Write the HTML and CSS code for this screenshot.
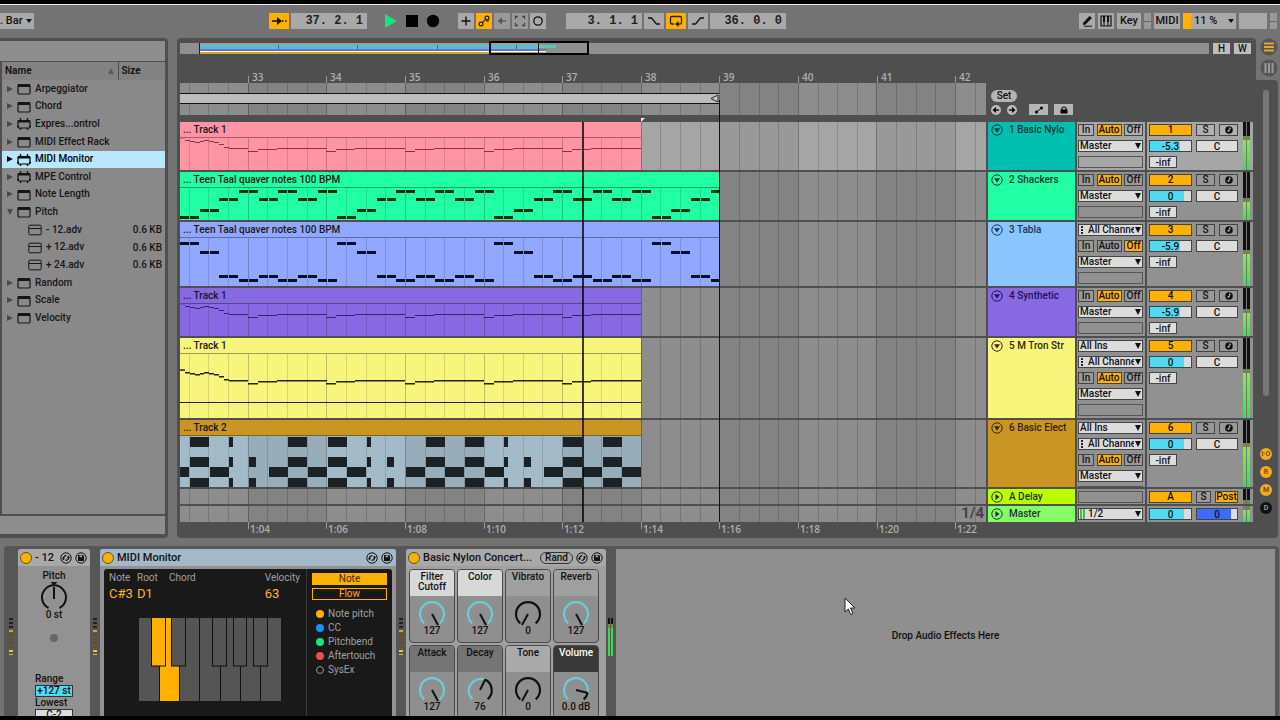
FILE: index.html
```html
<!DOCTYPE html>
<html lang="en">
<head>
<meta charset="utf-8">
<title>Arrangement</title>
<link rel="stylesheet" href="styles.css">
</head>
<body>
<svg class="defs" aria-hidden="true">
  <symbol id="dev" viewBox="0 0 14 12"><rect x="1" y="1.5" width="12" height="9.5" rx="1" fill="none" stroke="currentColor" stroke-width="1.2"/><rect x="1" y="1" width="12" height="3" fill="currentColor"/></symbol>
  <symbol id="max" viewBox="0 0 14 12"><rect x="1" y="2.5" width="12" height="7.5" rx="1" fill="none" stroke="currentColor" stroke-width="1.2"/><rect x="1" y="2" width="12" height="2.5" fill="currentColor"/><path d="M3.5 0v3M10.5 0v3M3.5 10v2M10.5 10v2M0 8.5h2M12 8.5h2" stroke="currentColor" stroke-width="1.4"/></symbol>
  <symbol id="adv" viewBox="0 0 14 12"><rect x=".8" y="1.2" width="12.4" height="9.6" rx="1" fill="none" stroke="currentColor"/><path d="M1 4.5h12" stroke="currentColor"/></symbol>
  <symbol id="fold" viewBox="0 0 12 12"><circle cx="6" cy="6" r="5.2" fill="none" stroke="currentColor"/><path d="M3 4.3h6L6 8.6z" fill="currentColor"/></symbol>
  <symbol id="unfold" viewBox="0 0 12 12"><circle cx="6" cy="6" r="5.2" fill="none" stroke="currentColor"/><path d="M4.4 3v6L8.6 6z" fill="currentColor"/></symbol>
  <symbol id="arm" viewBox="0 0 8 8"><circle cx="4" cy="4" r="3.8" fill="#111"/><path d="M4.5 1.5v3M4.5 1.8l1.5 1" stroke="#bbb" stroke-width=".8"/><circle cx="3.5" cy="4.8" r="1" fill="#bbb"/></symbol>
  <symbol id="swap" viewBox="0 0 12 12"><circle cx="6" cy="6" r="5.2" fill="none" stroke="currentColor"/><path d="M3.4 7.2C3.2 5 4.4 3.6 6.4 3.6M8.6 4.8c.2 2.2-1 3.6-3 3.6" fill="none" stroke="currentColor" stroke-width="1.3"/><path d="M2 6.2h3L3.5 8.4zM7 5.8h3L8.5 3.6z" fill="currentColor"/></symbol>
  <symbol id="disk" viewBox="0 0 12 12"><circle cx="6" cy="6" r="5.2" fill="none" stroke="currentColor"/><path d="M3 3h5l1 1v5H3z" fill="currentColor"/><path d="M4.6 3.6h2.6v1.6H4.6z" fill="#aaa"/></symbol>
  <symbol id="knobMax" viewBox="0 0 28 26"><path d="M6.3 22.3A12 12 0 1 1 21.7 22.3" fill="none" stroke="#6ccbd6" stroke-width="2.2"/><path d="M14 13l6 11" stroke="#111" stroke-width="2"/></symbol>
  <symbol id="knobMin" viewBox="0 0 28 26"><path d="M6.3 22.3A12 12 0 1 1 21.7 22.3" fill="none" stroke="#111" stroke-width="2.2"/><path d="M14 13l-6 11" stroke="#111" stroke-width="2"/></symbol>
  <symbol id="knobMid" viewBox="0 0 28 26"><path d="M19.5 2.8A12 12 0 0 1 21.7 22.3" fill="none" stroke="#111" stroke-width="2.2"/><path d="M6.3 22.3A12 12 0 0 1 19.5 2.8" fill="none" stroke="#6ccbd6" stroke-width="2.2"/><path d="M14 13l5.5-11" stroke="#111" stroke-width="2"/></symbol>
  <symbol id="knobVol" viewBox="0 0 28 26"><path d="M25.6 16A12 12 0 0 1 21.7 22.3" fill="none" stroke="#111" stroke-width="2.2"/><path d="M6.3 22.3A12 12 0 1 1 25.6 16" fill="none" stroke="#6ccbd6" stroke-width="2.2"/><path d="M14 13l12 3" stroke="#111" stroke-width="2"/></symbol>
</svg>

<div class="app">
  <header class="topbar">
    <div class="group bar-group"><button class="tb quant">. Bar <i class="caret"></i></button></div>
    <div class="group follow-group">
      <button class="tb on w20" aria-label="Follow"><svg width="16" height="10"><path d="M1 5h7M11 5h1.5M14 5h1.5" stroke="#111" stroke-width="1.4"/><path d="M6 1l5 4-5 4z" fill="#111"/></svg></button>
      <input class="tb pos w76" aria-label="Position" value="37. 2. 1">
    </div>
    <div class="group play-group">
      <button class="bare" aria-label="Play"><svg width="14" height="14"><path d="M1 0l12 7-12 7z" fill="#1fe07d"/></svg></button>
      <button class="bare" aria-label="Stop"><svg width="14" height="14"><rect x="1" y="1" width="12" height="12" fill="#000"/></svg></button>
      <button class="bare" aria-label="Record"><svg width="14" height="14"><circle cx="7" cy="7" r="6.2" fill="#000"/></svg></button>
    </div>
    <div class="group edit-group">
      <button class="tb w16" aria-label="Overdub"><svg width="12" height="12"><path d="M6 1.5v9M1.5 6h9" stroke="#111" stroke-width="1.4"/></svg></button>
      <button class="tb on w16" aria-label="Automation arm"><svg width="12" height="12" fill="none" stroke="#222" stroke-width="1.2"><circle cx="3" cy="9" r="1.9"/><circle cx="9" cy="3" r="1.9"/><path d="M4.4 7.6C6 6.5 6 5.5 7.6 4.4M8 6h3"/></svg></button>
      <button class="tb w16 dim" aria-label="Re-enable automation"><svg width="12" height="12"><path d="M4 6h6" stroke="#555" stroke-width="1.4"/><path d="M6 2.5v7L1.5 6z" fill="#555"/></svg></button>
      <button class="tb w16 dim" aria-label="Capture"><svg width="12" height="12"><path d="M1.5 4V1.5H4M8 1.5h2.5V4M10.5 8v2.5H8M4 10.5H1.5V8" fill="none" stroke="#444" stroke-width="1.3"/></svg></button>
      <button class="tb w16" aria-label="Session record"><svg width="12" height="12"><circle cx="6" cy="6" r="4.2" fill="none" stroke="#111" stroke-width="1.3"/></svg></button>
    </div>
    <div class="group loop-group">
      <input class="tb pos w76" aria-label="Loop start" value="3. 1. 1">
      <button class="tb w20" aria-label="Punch in"><svg width="14" height="10"><path d="M1 2h3.5l5 6H13" fill="none" stroke="#111" stroke-width="1.3"/></svg></button>
      <button class="tb on w20" aria-label="Loop"><svg width="14" height="12"><path d="M5 9H3Q1.5 9 1.5 7.5v-4.500Q1.500 1.500 3 1.500h8Q12.500 1.500 12.500 3v4.500Q12.500 9 11 9H9" fill="none" stroke="#222" stroke-width="1.3"/><path d="M9.5 6v6L6 9z" fill="#222"/></svg></button>
      <button class="tb w20" aria-label="Punch out"><svg width="14" height="10"><path d="M1 8h3.5l5-6H13" fill="none" stroke="#111" stroke-width="1.3"/></svg></button>
      <input class="tb pos w76" aria-label="Loop length" value="36. 0. 0">
    </div>
    <div class="group right-group">
      <button class="tb w16" aria-label="Draw"><svg width="12" height="12"><path d="M2 8l6.500-7L11 3 4.500 9.500 2 10z" fill="#111"/><path d="M3 11.200h8" stroke="#111"/></svg></button>
      <button class="tb w16" aria-label="Computer keyboard"><svg width="12" height="12"><path d="M1 1h10v10H1z" fill="none" stroke="#111" stroke-width="1.2"/><path d="M4 1v6M8 1v6" stroke="#111" stroke-width="2"/><path d="M4 6v5M8 6v5" stroke="#111"/></svg></button>
      <button class="tb w24">Key</button>
      <i class="leds"></i>
      <button class="tb w26">MIDI</button>
      <button class="tb cpu">11 % <i class="caret"></i></button>
      <i class="tb w28"></i>
      <i class="leds"></i>
    </div>
  </header>

  <main class="main">
    <section class="browser">
      <div class="browser-top"></div>
      <div class="browser-list">
        <table>
          <thead><tr><th>Name <i class="sort"></i></th><th class="size">Size</th></tr></thead>
          <tbody>
            <tr><td><i class="tri"></i><svg><use href="#dev"/></svg>Arpeggiator</td><td></td></tr>
            <tr><td><i class="tri"></i><svg><use href="#dev"/></svg>Chord</td><td></td></tr>
            <tr><td><i class="tri"></i><svg><use href="#max"/></svg>Expres...ontrol</td><td></td></tr>
            <tr><td><i class="tri"></i><svg><use href="#dev"/></svg>MIDI Effect Rack</td><td></td></tr>
            <tr class="sel"><td><i class="tri"></i><svg><use href="#max"/></svg>MIDI Monitor</td><td></td></tr>
            <tr><td><i class="tri"></i><svg><use href="#max"/></svg>MPE Control</td><td></td></tr>
            <tr><td><i class="tri"></i><svg><use href="#dev"/></svg>Note Length</td><td></td></tr>
            <tr><td><i class="tri open"></i><svg><use href="#dev"/></svg>Pitch</td><td></td></tr>
            <tr class="child"><td><svg><use href="#adv"/></svg>- 12.adv</td><td>0.6 KB</td></tr>
            <tr class="child"><td><svg><use href="#adv"/></svg>+ 12.adv</td><td>0.6 KB</td></tr>
            <tr class="child"><td><svg><use href="#adv"/></svg>+ 24.adv</td><td>0.6 KB</td></tr>
            <tr><td><i class="tri"></i><svg><use href="#dev"/></svg>Random</td><td></td></tr>
            <tr><td><i class="tri"></i><svg><use href="#dev"/></svg>Scale</td><td></td></tr>
            <tr><td><i class="tri"></i><svg><use href="#dev"/></svg>Velocity</td><td></td></tr>
          </tbody>
        </table>
      </div>
      <div class="browser-foot"></div>
    </section>

    <section class="arrange">
      <div class="overview">
        <div class="overview-strip">
          <svg width="430" height="17" aria-hidden="true">
            <rect x="20" y="3" width="338" height="2" fill="#c98a80"/><rect x="20" y="4" width="338" height="5" fill="#62b9c9"/><rect x="358" y="5" width="18" height="3" fill="#5cc9b5"/><rect x="20" y="9" width="346" height="2" fill="#6a72c4"/><rect x="20" y="11" width="346" height="1" fill="#fff"/><rect x="20" y="12" width="346" height="2" fill="#cfa63a"/>
            <path d="M19.5 3v11" stroke="#222"/><path d="M98.5 5v4M177.5 5v4M257.5 5v4M336.5 5v4" stroke="#2d6f88"/>
            <rect x="310" y="2" width="98" height="12" fill="none" stroke="#000" stroke-width="2"/><path d="M358.5 2v12" stroke="#111"/>
          </svg>
        </div>
        <button class="hw">H</button><button class="hw">W</button>
      </div>
      <div class="heads">
        <div class="heads-time">
          <svg class="ruler" data-ruler="bars"></svg>
          <div class="scrub"><svg class="grid"></svg><div class="loop"><svg width="10" height="9"><path d="M9 1L2 4.500 9 8z" fill="#ccc" stroke="#222"/></svg></div></div>
        </div>
        <div class="heads-side">
          <button class="set">Set</button>
          <div class="locators">
            <button class="round" aria-label="Previous locator"><svg width="8" height="8"><path d="M1 4h6" stroke="#111" stroke-width="1.5"/><path d="M4 .8v6.400L.6 4z" fill="#111"/></svg></button>
            <button class="round" aria-label="Next locator"><svg width="8" height="8"><path d="M1 4h6" stroke="#111" stroke-width="1.5"/><path d="M4 .8v6.400L7.400 4z" fill="#111"/></svg></button>
            <button class="mini" aria-label="Automation"><svg width="10" height="8"><path d="M2 6.500l6-5" stroke="#111"/><circle cx="2.5" cy="6" r="1.5"/><circle cx="7.5" cy="2" r="1.5"/></svg></button>
            <button class="mini" aria-label="Lock envelopes"><svg width="10" height="8"><rect x="1.5" y="3.5" width="7" height="4"/><path d="M3 4V2.500Q3 1 5 1t2 1.500V4" fill="none" stroke="#111" stroke-width="1.2"/></svg></button>
          </div>
        </div>
      </div>

      <div class="tracks">
        <article class="track h48 active">
          <div class="lane"><svg class="grid"></svg><div class="clip short pink"><h4>... Track 1</h4><svg data-notes="melody"></svg></div></div>
          <div class="name teal"><svg><use href="#fold"/></svg>1 Basic Nylo</div>
          <div class="io">
            <div class="mon"><button>In</button><button class="on">Auto</button><button>Off</button></div>
            <label class="sel-box"><select aria-label="Output 1"><option>Master</option></select></label>
            <i class="slot"></i>
          </div>
          <div class="mix"><div class="strip"><button class="on">1</button><button>S</button><button aria-label="Arm 1"><svg><use href="#arm"/></svg></button><input class="vol" style="--v:72%" aria-label="Volume 1" value="-5.3"><input class="pan" aria-label="Pan 1" value="C"><input class="send" aria-label="Send 1" value="-inf"></div><i class="meter" style="--m:62%"></i></div>
        </article>
        <article class="track h48">
          <div class="lane"><svg class="grid"></svg><div class="clip long green"><h4>... Teen Taal quaver notes 100 BPM</h4><svg data-notes="high"></svg></div></div>
          <div class="name green"><svg><use href="#fold"/></svg>2 Shackers</div>
          <div class="io">
            <div class="mon"><button>In</button><button class="on">Auto</button><button>Off</button></div>
            <label class="sel-box"><select aria-label="Output 2"><option>Master</option></select></label>
            <i class="slot"></i>
          </div>
          <div class="mix"><div class="strip"><button class="on">2</button><button>S</button><button aria-label="Arm 2"><svg><use href="#arm"/></svg></button><input class="vol" style="--v:84%" aria-label="Volume 2" value="0"><input class="pan" aria-label="Pan 2" value="C"><input class="send" aria-label="Send 2" value="-inf"></div><i class="meter" style="--m:38%"></i></div>
        </article>
        <article class="track h64">
          <div class="lane"><svg class="grid"></svg><div class="clip long blue"><h4>... Teen Taal quaver notes 100 BPM</h4><svg data-notes="low"></svg></div></div>
          <div class="name sky"><svg><use href="#fold"/></svg>3 Tabla</div>
          <div class="io">
            <label class="sel-box chan"><select aria-label="Channel 3"><option>All Channels</option></select></label>
            <div class="mon"><button>In</button><button>Auto</button><button class="on">Off</button></div>
            <label class="sel-box"><select aria-label="Output 3"><option>Master</option></select></label>
            <i class="slot"></i>
          </div>
          <div class="mix"><div class="strip"><button class="on">3</button><button>S</button><button aria-label="Arm 3"><svg><use href="#arm"/></svg></button><input class="vol" style="--v:72%" aria-label="Volume 3" value="-5.9"><input class="pan" aria-label="Pan 3" value="C"><input class="send" aria-label="Send 3" value="-inf"></div><i class="meter" style="--m:50%"></i></div>
        </article>
        <article class="track h48">
          <div class="lane"><svg class="grid"></svg><div class="clip short violet"><h4>... Track 1</h4><svg data-notes="melody"></svg></div></div>
          <div class="name violet"><svg><use href="#fold"/></svg>4 Synthetic</div>
          <div class="io">
            <div class="mon"><button>In</button><button class="on">Auto</button><button>Off</button></div>
            <label class="sel-box"><select aria-label="Output 4"><option>Master</option></select></label>
            <i class="slot"></i>
          </div>
          <div class="mix"><div class="strip"><button class="on">4</button><button>S</button><button aria-label="Arm 4"><svg><use href="#arm"/></svg></button><input class="vol" style="--v:72%" aria-label="Volume 4" value="-5.9"><input class="pan" aria-label="Pan 4" value="C"><input class="send" aria-label="Send 4" value="-inf"></div><i class="meter" style="--m:48%"></i></div>
        </article>
        <article class="track h80">
          <div class="lane"><svg class="grid"></svg><div class="clip short yellow"><h4>... Track 1</h4><svg data-notes="lead"></svg></div></div>
          <div class="name yellow"><svg><use href="#fold"/></svg>5 M Tron Str</div>
          <div class="io">
            <label class="sel-box"><select aria-label="Input 5"><option>All Ins</option></select></label>
            <label class="sel-box chan"><select aria-label="Channel 5"><option>All Channels</option></select></label>
            <div class="mon"><button>In</button><button class="on">Auto</button><button>Off</button></div>
            <label class="sel-box"><select aria-label="Output 5"><option>Master</option></select></label>
            <i class="slot"></i>
          </div>
          <div class="mix"><div class="strip"><button class="on">5</button><button>S</button><button aria-label="Arm 5"><svg><use href="#arm"/></svg></button><input class="vol" style="--v:84%" aria-label="Volume 5" value="0"><input class="pan" aria-label="Pan 5" value="C"><input class="send" aria-label="Send 5" value="-inf"></div><i class="meter" style="--m:56%"></i></div>
        </article>
        <article class="track h67">
          <div class="lane"><svg class="grid"></svg><div class="clip short gold"><h4>... Track 2</h4><svg data-notes="drums"></svg></div></div>
          <div class="name gold"><svg><use href="#fold"/></svg>6 Basic Elect</div>
          <div class="io">
            <label class="sel-box"><select aria-label="Input 6"><option>All Ins</option></select></label>
            <label class="sel-box chan"><select aria-label="Channel 6"><option>All Channels</option></select></label>
            <div class="mon"><button>In</button><button class="on">Auto</button><button>Off</button></div>
            <label class="sel-box"><select aria-label="Output 6"><option>Master</option></select></label>
            <i class="slot"></i>
          </div>
          <div class="mix"><div class="strip"><button class="on">6</button><button>S</button><button aria-label="Arm 6"><svg><use href="#arm"/></svg></button><input class="vol" style="--v:84%" aria-label="Volume 6" value="0"><input class="pan" aria-label="Pan 6" value="C"><input class="send" aria-label="Send 6" value="-inf"></div><i class="meter" style="--m:60%"></i></div>
        </article>
        <article class="track h15">
          <div class="lane"><svg class="grid"></svg></div>
          <div class="name lime"><svg><use href="#unfold"/></svg>A Delay</div>
          <div class="io"><i class="slot"></i></div>
          <div class="mix"><div class="strip ret"><button class="on">A</button><button>S</button><button class="on">Post</button></div><i class="meter" style="--m:0%"></i></div>
        </article>
        <article class="track h16">
          <div class="lane"><svg class="grid"></svg><span class="zoom-label">1/4</span></div>
          <div class="name mint"><svg><use href="#unfold"/></svg>Master</div>
          <div class="io"><label class="sel-box out"><select aria-label="Master output"><option>1/2</option></select></label></div>
          <div class="mix"><div class="strip main-out"><input class="vol" style="--v:84%" aria-label="Master volume" value="0"><input class="vol cue" style="--v:84%" aria-label="Cue volume" value="0"></div><i class="meter" style="--m:75%"></i></div>
        </article>
        <i class="playhead"></i>
        <i class="loop-end"></i>
        <i class="flag"></i>
      </div>
      <svg class="time-ruler" data-ruler="time"></svg>
    </section>

    <aside class="rail">
      <div class="views">
        <button class="view" aria-label="Arrangement view"><svg width="18" height="18"><circle cx="9" cy="9" r="8.5" fill="#555"/><path d="M4 5.500h10M4 9h10M4 12.500h10" stroke="#e3a52a" stroke-width="2.2"/></svg></button>
        <button class="view" aria-label="Session view"><svg width="18" height="18"><circle cx="9" cy="9" r="8.5" fill="#555"/><path d="M5.500 4v10M9 4v10M12.500 4v10" stroke="#999" stroke-width="2"/></svg></button>
      </div>
      <div class="rail-body">
        <i class="scroll"></i>
        <div class="dots"><button>I·O</button><button>R</button><button>M</button><button class="off">D</button></div>
      </div>
    </aside>
  </main>

  <footer class="devices">
    <i class="dotmeter"></i>
    <section class="device pitch">
      <h3><i class="led"></i><span>- 12</span><svg><use href="#swap"/></svg><svg><use href="#disk"/></svg></h3>
      <div class="pitch-body">
        <b>Pitch</b>
        <svg width="28" height="30"><path d="M8.500 26A12 12 0 1 1 19.500 26" fill="none" stroke="#111" stroke-width="2"/><path d="M14 5v12" stroke="#111" stroke-width="2"/><path d="M10.500 0h7L14 3.500z" fill="#111"/></svg>
        <b class="st">0 st</b>
        <i class="dot"></i>
        <label for="range">Range</label><input id="range" class="cyan" value="+127 st">
        <label for="lowest">Lowest</label><input id="lowest" value="C-2">
      </div>
    </section>
    <i class="dotmeter"></i>
    <section class="device monitor">
      <h3><i class="led"></i><span>MIDI Monitor</span><svg><use href="#swap"/></svg><svg><use href="#disk"/></svg></h3>
      <div class="screen">
        <div class="readout">
          <dl><div><dt>Note</dt><dd>C#3</dd></div><div><dt>Root</dt><dd>D1</dd></div><div><dt>Chord</dt></div><div class="vel"><dt>Velocity</dt><dd>63</dd></div></dl>
          <svg class="keys" width="142" height="83">
            <rect width="142" height="83" fill="#555"/><rect x="20" width="20" height="83" fill="#ffb000"/>
            <path d="M20.500 48v35M40.500 48v35M60.500 0v83M81.500 48v35M101.500 48v35M121.500 48v35" stroke="#111"/>
            <g stroke="#111" fill="#555"><rect x="12.5" y="-1" width="14" height="49" fill="#ffb000"/><rect x="32.5" y="-1" width="14" height="49"/><rect x="73.5" y="-1" width="14" height="49"/><rect x="94.5" y="-1" width="13" height="49"/><rect x="114.5" y="-1" width="14" height="49"/></g>
          </svg>
        </div>
        <div class="filters">
          <button class="fill">Note</button><button>Flow</button>
          <label><input type="checkbox" class="c-or">Note pitch</label>
          <label><input type="checkbox" class="c-bl">CC</label>
          <label><input type="checkbox" class="c-gr">Pitchbend</label>
          <label><input type="checkbox" class="c-rd">Aftertouch</label>
          <label><input type="checkbox">SysEx</label>
        </div>
      </div>
    </section>
    <i class="dotmeter"></i>
    <section class="device rack">
      <h3><i class="led"></i><span>Basic Nylon Concert...</span><button class="rand">Rand</button><svg><use href="#swap"/></svg><svg><use href="#disk"/></svg></h3>
      <div class="macros">
        <div class="macro"><b class="white">Filter<br>Cutoff</b><svg><use href="#knobMax"/></svg><span>127</span></div>
        <div class="macro"><b class="white">Color</b><svg><use href="#knobMax"/></svg><span>127</span></div>
        <div class="macro"><b>Vibrato</b><svg><use href="#knobMin"/></svg><span>0</span></div>
        <div class="macro"><b>Reverb</b><svg><use href="#knobMax"/></svg><span>127</span></div>
        <div class="macro"><b class="gray">Attack</b><svg><use href="#knobMax"/></svg><span>127</span></div>
        <div class="macro"><b class="gray">Decay</b><svg><use href="#knobMid"/></svg><span>76</span></div>
        <div class="macro"><b class="pale">Tone</b><svg><use href="#knobMin"/></svg><span>0</span></div>
        <div class="macro"><b class="black">Volume</b><svg><use href="#knobVol"/></svg><span>0.0 dB</span></div>
      </div>
    </section>
    <i class="levels"></i>
    <section class="drop">Drop Audio Effects Here</section>
  </footer>
</div>
<svg class="cursor" width="14" height="20" aria-hidden="true"><path d="M2 1v14l3.300-3 2.400 5.500 2.300-1L7.600 11H12z" fill="#fff" stroke="#222"/></svg>
<script src="timeline.js"></script>
</body>
</html>
```
FILE: styles.css
```css
* { box-sizing: border-box; }
body { margin: 0; background: #000; color: #111; font: 500 10px/12px Roboto, "Liberation Sans", sans-serif; }
button, input, select { font: inherit; color: inherit; margin: 0; padding: 0; border: 0; border-radius: 0; background: none; min-width: 0; }
h3, h4, dl, dd { margin: 0; font: inherit; }
i { font-style: normal; }
svg { display: block; flex: none; }
.defs { position: absolute; width: 0; height: 0; }
.app { display: flex; flex-direction: column; height: 100vh; overflow: hidden; border-top: 4px solid #000; border-bottom: 4px solid #000; background: #737373; }

.topbar { display: flex; align-items: center; height: 34px; padding: 0 3px 1px 0; border-top: 1px solid #eee; }
.group { display: flex; align-items: center; gap: 2px; }
.tb { display: flex; align-items: center; justify-content: center; gap: 8px; height: 16px; padding: 0 4px; background: #a9a9a9; font-size: 11px; }
.tb.on { background: #ffb000; }
.tb.dim { background: #999; }
.w16 { width: 16px; padding: 0; }
.w20 { width: 20px; padding: 0; }
.w24 { width: 24px; padding: 0; }
.w26 { width: 26px; padding: 0; }
.w28 { width: 28px; }
.w76 { width: 76px; }
.pos { padding: 0 4px; text-align: right; font: bold 12px/16px "Liberation Mono", monospace; color: #222; }
.caret { border: 3px solid transparent; border-top: 4px solid #111; border-bottom: 0; }
.bar-group { width: 269px; }
.tb.quant { width: 34px; justify-content: space-between; gap: 0; padding: 0 2px 0 0; }
.play-group { gap: 7px; margin-left: 17px; }
.edit-group { margin-left: 18px; }
.loop-group { margin-left: 20px; }
.right-group { margin-left: auto; gap: 3px; }
.bare { display: flex; }
.leds { width: 7px; height: 16px; background: linear-gradient(#999 8px, #666 8px, #666 9px, #999 9px); }
.tb.cpu { width: 53px; border-left: 8px solid #ffb000; padding: 0 2px 0 3px; gap: 0; justify-content: space-between; }

.main { display: flex; align-items: stretch; height: 500px; }
.browser { display: flex; flex-direction: column; width: 168px; margin-right: 9px; padding: 3px 3px 4px 0; background: #4f4f4f; border-radius: 0 4px 4px 0; }
.browser-top { height: 20px; background: #8e8e8e; }
.browser-list { flex: 1; margin: 1px 0 2px 2px; background: #898989; }
.browser-foot { height: 18px; background: #8e8e8e; }
.browser table { width: 100%; height: 265px; border-collapse: collapse; table-layout: fixed; }
.browser th { height: 18px; padding: 0 0 0 3px; text-align: left; font-weight: 600; background: #828282; }
.browser th.size { width: 47px; border-left: 1px solid #4f4f4f; }
.browser td { padding: 0; white-space: nowrap; color: #161616; overflow: visible; }
.browser td:first-child { padding-left: 5px; }
.browser td:last-child { text-align: right; padding-right: 3px; }
.browser td svg { display: inline-block; width: 14px; height: 12px; margin-right: 4px; vertical-align: middle; }
.tri { display: inline-block; width: 6px; margin-right: 4px; border: 3px solid transparent; border-left: 6px solid #4a4a4a; border-right: 0; }
.tri.open { border: 3px solid transparent; border-top: 6px solid #4a4a4a; border-bottom: 0; }
.sort { float: right; margin: 3px 4px 0 0; border: 3px solid transparent; border-bottom: 6px solid #5a5a5a; border-top: 0; }
.browser .sel td { background: #b9e7fb; color: #000; }
.browser .sel .tri { border-left-color: #000; }
.browser .child td:first-child { padding-left: 26px; }

.arrange { flex: 1; min-width: 0; padding: 5px 3px 0; background: #4f4f4f; border-radius: 4px 4px 0 4px; }
.overview { display: flex; gap: 4px; height: 11px; padding-right: 2px; }
.overview-strip { flex: 1; background: #8f8f8f; }
.overview-strip svg { margin-top: -3px; }
.hw { width: 17px; height: 11px; background: #bdbdbd; line-height: 11px; }
.heads { display: flex; gap: 2px; height: 61px; }
.heads-time { flex: 1; min-width: 0; }
.ruler { width: 100%; height: 29px; }
.ruler text, .time-ruler text { font: 600 10px "Open Sans", sans-serif; fill: #b0b0b0; }
.scrub { position: relative; height: 32px; padding-top: 10px; background: #898989; }
.grid { position: absolute; inset: 0; width: 100%; height: 100%; }
.loop { position: relative; display: flex; justify-content: flex-end; width: 539px; height: 11px; background: #bdbdbd; border: solid #111; border-width: 1px 0; }
.heads-side { display: flex; flex-direction: column; justify-content: flex-end; gap: 2px; width: 265px; padding-left: 3px; }
.set { width: 26px; height: 12px; border-radius: 6px; background: #b5b5b5; line-height: 12px; }
.locators { display: flex; gap: 6px; align-items: center; }
.round { display: flex; align-items: center; justify-content: center; width: 10px; height: 10px; border-radius: 5px; background: #bbb; }
.mini { display: flex; align-items: center; justify-content: center; width: 19px; height: 11px; background: #b5b5b5; }
.round + .mini { margin-left: 6px; }

.tracks { position: relative; display: flex; flex-direction: column; gap: 2px; margin-top: 7px; }
.track { display: grid; grid-template-columns: 1fr 87px 68px 106px; grid-template-rows: 100%; gap: 2px; }
.h48 { height: 48px; }
.h64 { height: 64px; }
.h80 { height: 80px; }
.h67 { height: 67px; }
.h15 { height: 15px; }
.h16 { height: 16px; }
.lane { position: relative; overflow: hidden; background: #898989; }
.active .lane { background: #a2a2a2; }
.clip { position: relative; display: flex; flex-direction: column; height: 100%; overflow: hidden; }
.clip.short { width: 461px; }
.clip.long { width: 539px; }
.clip h4 { flex: none; height: 16px; padding: 2px 3px 0; border-bottom: 1px solid rgba(0, 0, 0, .35); color: #181818; line-height: 12px; white-space: nowrap; }
.clip svg { flex: 1; width: 100%; min-height: 0; }
.pink { background: #ff94a4; color: #8d2f41; }
.green { background: #20ffa4; color: #062f10; }
.blue { background: #92a7ff; color: #08102c; }
.violet { background: #8769e3; color: #35236f; }
.yellow { background: #f7f57c; color: #25240a; }
.gold { background: #c99624; color: #1c2226; }
.teal { background: #00bfaf; }
.sky { background: #8bc5ff; }
.lime { background: #b9ff00; }
.mint { background: #86ff67; }
.name { display: flex; gap: 6px; padding: 2px 3px; overflow: hidden; white-space: nowrap; color: #1d3531; }
.name.sky { color: #17385c; }
.name.violet { color: #1f1452; }
.name.yellow, .name.gold { color: #33270a; }
.name svg { width: 12px; height: 12px; }
.io, .mix { background: #919191; overflow: hidden; }
.active .io, .active .mix { background: #a6a6a6; }
.io { display: flex; flex-direction: column; gap: 4px; padding: 2px 2px 0 1px; }
.io > * { flex: none; height: 12px; }
.mon { display: grid; grid-template-columns: 16px 25px 19px; justify-content: space-between; }
.mon button, .strip button { display: flex; align-items: center; justify-content: center; border: 1px solid #444; background: #999; line-height: 10px; overflow: hidden; }
.active .mon button, .active .strip button { background: #b0b0b0; }
.track .mon .on, .track .strip .on { background: #ffb000; }
.slot { border: 1px solid #555; }
.sel-box { position: relative; display: block; border: 1px solid #444; background: #dcdcdc; }
.sel-box select { display: block; width: 100%; height: 10px; padding-left: 1px; appearance: none; line-height: 10px; overflow: hidden; }
.sel-box::after { content: ""; position: absolute; top: 0; right: 0; width: 8px; height: 10px; background: #dcdcdc; }
.sel-box::before { content: ""; position: absolute; z-index: 1; top: 2px; right: 1px; border: 3px solid transparent; border-top: 6px solid #111; border-bottom: 0; }
.chan { background: repeating-linear-gradient(#222 0 2px, #dcdcdc 2px 3px) 2px 1px / 2px 8px no-repeat #dcdcdc; }
.out { background: linear-gradient(90deg, #4db848 2px, #dcdcdc 2px 3px, #4db848 3px) 1px 0 / 5px 10px no-repeat #dcdcdc; }
.chan select, .out select { padding-left: 9px; }
.mix { display: flex; justify-content: space-between; padding: 0 3px 0 2px; }
.strip { display: grid; grid-template-columns: 43px 19px 19px; grid-auto-rows: 12px; gap: 4px; align-content: start; padding-top: 2px; }
.strip button svg { width: 8px; height: 8px; }
.strip input { width: 100%; height: 12px; border: 1px solid #444; background: #dcdcdc; text-align: center; line-height: 10px; }
.strip .vol { background: linear-gradient(90deg, #4fd9f2 var(--v), #dcdcdc var(--v)); }
.strip .cue { background: linear-gradient(90deg, #3d6bff var(--v), #dcdcdc var(--v)); }
.strip .pan { grid-column: span 2; }
.strip .send { width: 28px; }
.strip.ret { grid-template-columns: 43px 15px 23px; }
.strip.main-out { grid-template-columns: 43px 42px; }
.meter { width: 7px; background: linear-gradient(90deg, transparent 3px, #777 3px 4px, transparent 4px), linear-gradient(0deg, #32e34a, #8bea4a var(--m), #6a8c3c var(--m), #6a8c3c calc(var(--m) + 4px), #111 calc(var(--m) + 4px)); }
.playhead { position: absolute; top: 0; bottom: 0; left: 402px; width: 2px; background: rgba(0, 0, 0, .75); }
.loop-end { position: absolute; top: -22px; bottom: 0; left: 539px; width: 1px; background: #111; }
.flag { position: absolute; top: -4px; left: 461px; border-top: 4px solid #eee; border-right: 4px solid transparent; }
.zoom-label { position: absolute; right: 2px; top: -1px; font: bold 15px/16px Roboto, sans-serif; color: #444; }
.time-ruler { width: 100%; height: 16px; }

.rail { display: flex; flex-direction: column; width: 24px; }
.views { display: flex; flex-direction: column; align-items: flex-end; gap: 3px; height: 42px; padding-right: 2px; background: #737373; }
.view { display: flex; }
.rail-body { flex: 1; display: flex; flex-direction: column; align-items: center; justify-content: space-between; margin-right: 2px; padding: 10px 2px 24px 0; background: #4f4f4f; border-radius: 0 4px 4px 0; }
.scroll { width: 6px; height: 306px; border-radius: 3px; background: #777; }
.dots { display: grid; gap: 6px; }
.dots button { width: 12px; height: 12px; border-radius: 6px; background: #f5aa1c; color: #5f420a; font-size: 7px; line-height: 12px; white-space: nowrap; }
.dots .off { background: #111; color: #aaa; }

.devices { flex: 1; display: flex; min-height: 0; margin: 8px 1px 0 4px; padding: 3px 4px 0 0; background: #565656; border-radius: 4px 4px 0 0; }
.device { flex: none; display: flex; flex-direction: column; background: #929292; border-radius: 3px 3px 0 0; overflow: hidden; }
.device h3 { display: flex; flex: none; align-items: center; gap: 3px; height: 17px; padding: 0 3px 0 2px; background: #a9a9a9; font-size: 11px; white-space: nowrap; }
.device h3 span { flex: 1; }
.device h3 svg { width: 12px; height: 12px; }
.led { width: 12px; height: 12px; border: 1px solid #6a5013; border-radius: 6px; background: #ffb000; }
.dotmeter { flex: none; width: 4px; height: 37px; margin: 69px 3px 0; background: repeating-linear-gradient(transparent 0 2px, #565656 2px 4px), linear-gradient(#222 10px, #c9a53c 10px 14px, #6b4a20 14px 32px, #e8c03c 32px); }
.devices > .dotmeter:first-child { margin-left: 5px; margin-right: 5px; }
.pitch { width: 72px; }
.pitch-body { display: flex; flex-direction: column; align-items: center; padding-top: 4px; }
.pitch-body b, .macro b { font-weight: 500; }
.pitch-body .st { margin-top: -3px; }
.dot { width: 8px; height: 8px; margin: 13px 0 31px; border-radius: 4px; background: #666; }
.pitch-body label { width: 38px; }
.pitch-body input { width: 38px; height: 12px; border: 1px solid #333; background: #ddd; text-align: center; }
.pitch-body .cyan { background: #4fd9f2; }
.monitor { width: 296px; }
.monitor h3 { background: #a3b9c8; }
.screen { flex: 1; display: flex; margin: 3px 4px 0; background: #191919; border-radius: 3px 3px 0 0; color: #a0a0a0; font-weight: 400; }
.readout { flex: 1; padding: 3px 6px 0 5px; border-right: 1px solid #3a3a3a; }
.readout dl { display: grid; grid-template-columns: 28px 32px 1fr auto; height: 46px; }
.readout dd { margin-top: 3px; color: #ffb52a; font-size: 13px; line-height: 14px; }
.keys { margin-left: 30px; }
.filters { display: flex; flex-direction: column; width: 85px; padding: 4px 5px 0; }
.filters button { flex: none; height: 12px; margin-bottom: 3px; border: 1px solid #ffb000; color: #ffb000; line-height: 10px; }
.filters .fill { background: #ffb000; color: #3d2a00; }
.filters button + label { margin-top: 4px; }
.filters label { display: flex; align-items: center; gap: 4px; height: 14px; padding-left: 4px; }
.filters input { appearance: none; width: 8px; height: 8px; border: 1px solid #999; border-radius: 4px; }
.filters .c-or { background: #ffb000; border: 0; }
.filters .c-bl { background: #1e8cff; border: 0; }
.filters .c-gr { background: #12e87c; border: 0; }
.filters .c-rd { background: #ee4d4d; border: 0; }
.rack { width: 200px; }
.rand { height: 12px; padding: 0 4px; border: 1px solid #333; border-radius: 6px; font-size: 10px; line-height: 10px; }
.macros { display: grid; grid-template-columns: repeat(4, 46px); grid-auto-rows: 74px; gap: 2px; padding: 3px 0 0 3px; background: #a0a0a0; }
.macro { display: flex; flex-direction: column; align-items: center; overflow: hidden; border: 1px solid #4a4a4a; border-radius: 4px; background: #8f8f8f; }
.macro b { align-self: stretch; height: 26px; padding-top: 2px; background: #9f9f9f; text-align: center; line-height: 10px; }
.macro .white { background: #d8d8d8; }
.macro .gray { background: #757575; }
.macro .pale { background: #aaa; }
.macro .black { background: #383838; color: #fff; }
.macro svg { width: 28px; height: 26px; margin-top: 5px; }
.macro span { margin-top: -2px; line-height: 12px; }
.levels { flex: none; width: 5px; height: 38px; margin: 69px 3px 0 2px; background: linear-gradient(90deg, transparent 2px, #565656 2px 3px, transparent 3px), linear-gradient(#111 6px, #7d8c3c 6px 10px, #36e04a 10px); }
.drop { flex: 1; display: flex; align-items: center; justify-content: center; padding-top: 6px; background: #8f8f8f; }
.cursor { position: absolute; left: 843px; top: 597px; }
```
FILE: timeline.js
```js
const BEAT = 19.65;
const BAR = BEAT * 4;
const FIRST_BAR = 67.7;
const NS = 'http://www.w3.org/2000/svg';

function add(parent, tag, attrs, text) {
  const node = document.createElementNS(NS, tag);
  for (const key in attrs) node.setAttribute(key, attrs[key]);
  if (text) node.textContent = text;
  parent.appendChild(node);
}

function beatLines(svg, color) {
  for (let x = FIRST_BAR - 3 * BEAT, i = 1; x < 2600; x += BEAT, i++) {
    add(svg, 'rect', { x: Math.round(x), y: 0, width: 1, height: '100%', fill: color, opacity: i % 4 ? 0.6 : 1 });
  }
}

function shadeBars(svg, color) {
  for (let x = FIRST_BAR; x < 2600; x += 2 * BAR) {
    add(svg, 'rect', { x, y: 0, width: BAR, height: '100%', fill: color });
  }
}

document.querySelectorAll('.grid').forEach(svg => {
  add(svg, 'rect', { width: '100%', height: '100%', fill: 'rgba(255,255,255,.04)' });
  shadeBars(svg, 'rgba(0,0,0,.07)');
  beatLines(svg, 'rgba(0,0,0,.28)');
});

document.querySelectorAll('[data-ruler]').forEach(svg => {
  const bars = svg.dataset.ruler === 'bars';
  for (let i = 0; i < 10; i++) {
    const x = Math.round(FIRST_BAR + i * BAR);
    const label = bars ? String(33 + i) : '1:' + String(4 + 2 * i).padStart(2, '0');
    add(svg, 'rect', { x, y: bars ? 22 : 0, width: 1, height: 7, fill: '#999' });
    add(svg, 'text', { x: x + (bars ? 4 : 2), y: bars ? 27 : 11 }, label);
  }
});

const phrase = [[0, 10, 3], [10, 29, 1], [29, 79, 0]];
const intro = [[0, 5, -10.7], [5, 10, -8], [10, 15, -7], [15, 20, -6], [20, 24, -7], [24, 29, -8], [29, 34, -7], [34, 39, -6], [39, 44, -4], [44, 49, -1], [49, 68, 0]];

function melody(svg, base, thick) {
  const line = ([from, to, dy], shift) =>
    add(svg, 'rect', { x: from + shift, y: base + dy, width: to - from, height: thick, fill: 'currentColor' });
  intro.forEach(note => line(note, 0));
  for (let bar = 0; bar < 5; bar++) phrase.forEach(note => line(note, Math.round(FIRST_BAR + bar * BAR)));
}

function pairs(svg, levels, height) {
  for (let k = 0; k < 28; k++) {
    const x = k * BEAT;
    for (const dx of [0, 10]) {
      add(svg, 'rect', { x: Math.round(x + dx), y: levels[k % 8], width: 9, height, fill: 'currentColor' });
    }
  }
}

function drums(svg) {
  const rows = [1, 21, 31, 42];
  const block = (row, beat, width) =>
    add(svg, 'rect', { x: Math.round(10 + beat * BEAT), y: rows[row], width, height: row === 3 ? 9 : 10, fill: '#1a2226' });
  for (let beat = -1; beat < 23; beat++) {
    const step = (beat + 7) % 7;
    if (step === 0 || step === 5) [0, 1, 3].forEach(row => block(row, beat, 19));
    else if (step === 2) [0, 1, 3].forEach(row => block(row, beat, 4));
    else if (step === 3) [1, 3].forEach(row => block(row, beat, 7));
    else block(2, beat, 19);
  }
}

const painters = {
  melody: svg => melody(svg, 10, 1),
  lead: svg => {
    melody(svg, 26, 1.5);
    add(svg, 'rect', { x: 0, y: 48, width: 461, height: 1, fill: 'currentColor' });
  },
  high: svg => pairs(svg, [28, 21, 10, 2, 10, 2, 10, 2], 3),
  low: svg => pairs(svg, [4, 13, 37, 41, 37, 41, 37, 41], 3),
  drums
};

document.querySelectorAll('[data-notes]').forEach(svg => {
  const kind = svg.dataset.notes;
  if (kind === 'drums') {
    add(svg, 'rect', { width: '100%', height: '100%', fill: '#a3bbc9' });
    shadeBars(svg, 'rgba(0,0,0,.07)');
  }
  beatLines(svg, 'rgba(0,0,0,.22)');
  painters[kind](svg);
});
```
